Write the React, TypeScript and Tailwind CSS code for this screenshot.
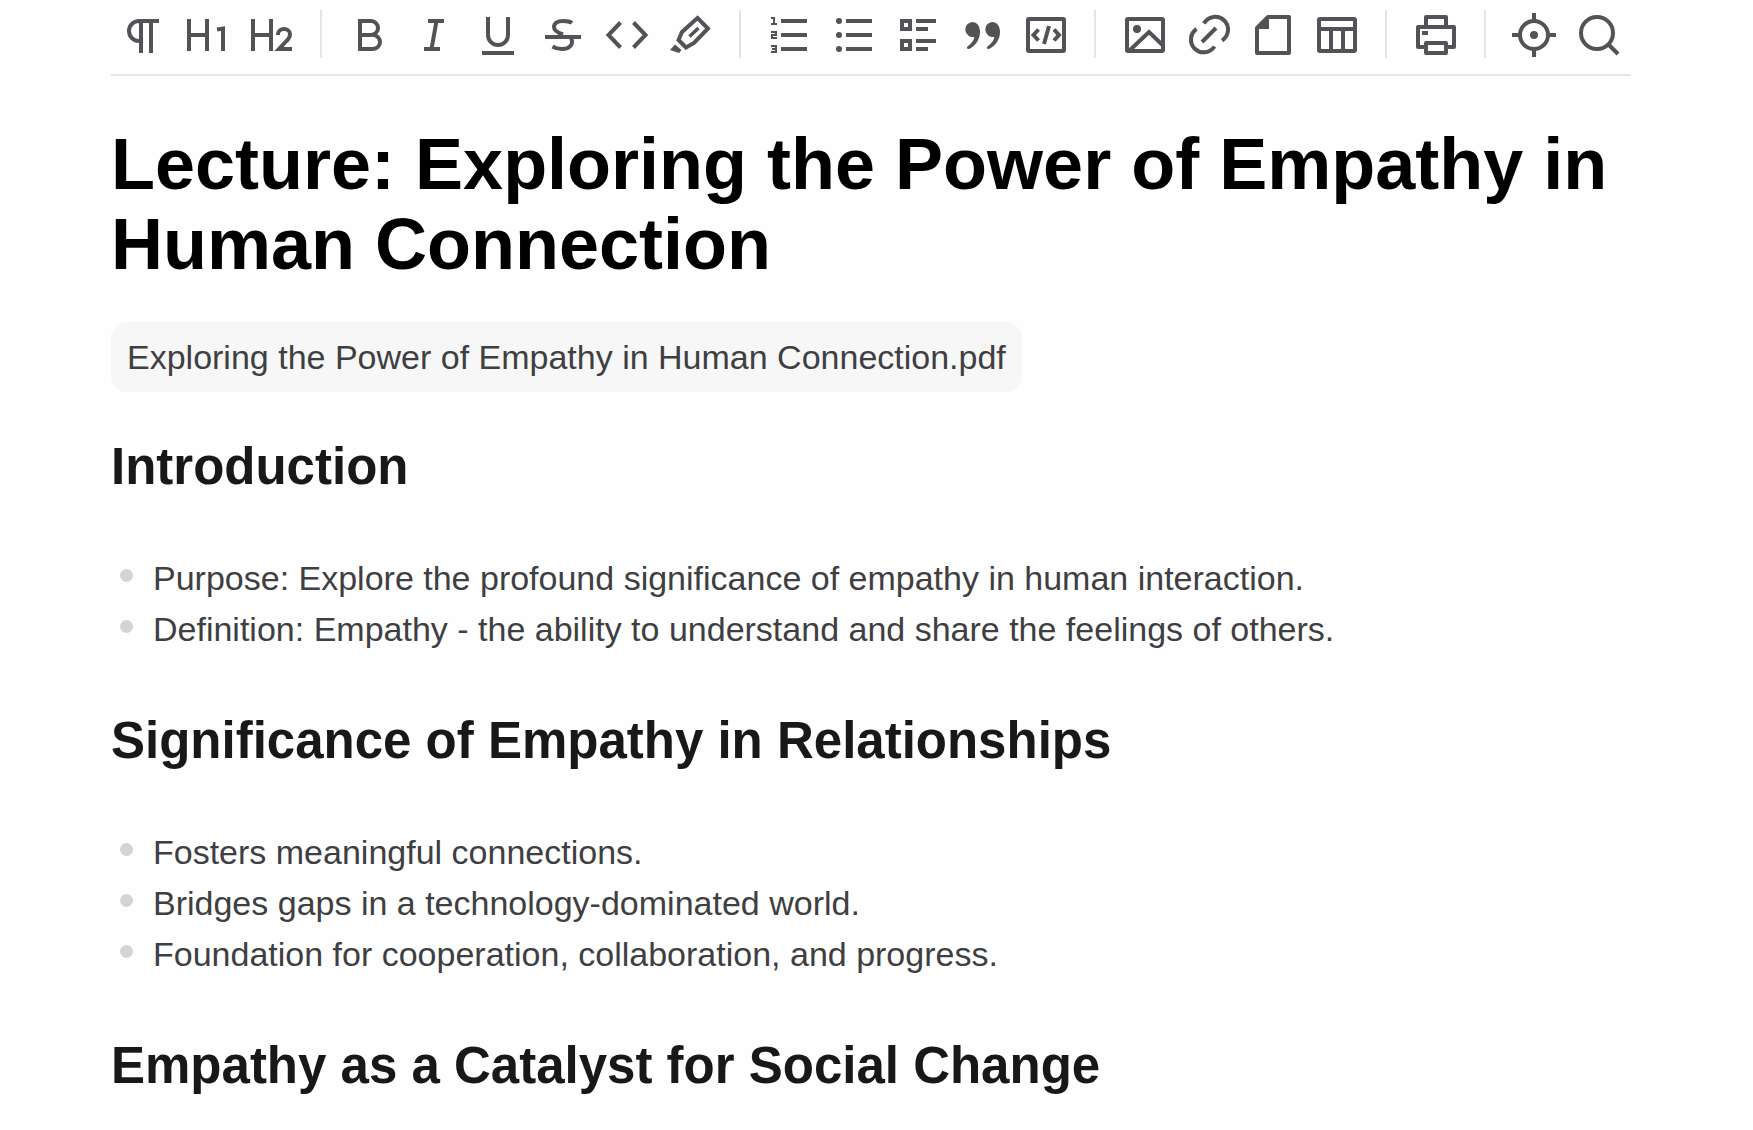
import type { ReactNode } from "react";

type Tool = { label: string; art: ReactNode };

const solid = { fill: "currentColor", stroke: "none" } as const;

const groups: Tool[][] = [
  [
    { label: "Paragraph", art: <path d="M40 10H20a10 10 0 0 0 0 20h2M22 10v32M32 10v32" /> },
    { label: "Heading 1", art: <path d="M6 8v32M24 8v32M6 24h18M34 18.500L40 17.500V40" /> },
    {
      label: "Heading 2",
      art: <path d="M6 8v32M24 8v32M6 24h18M31 24v-1a6 5 0 0 1 12 0c0 3-1.500 5-3 6.500L32 38H45" />,
    },
  ],
  [
    { label: "Bold", art: <path d="M14 24h11a7 7 0 0 0 0-14H14V38h13a7 7 0 0 0 0-14" /> },
    { label: "Italic", art: <path d="M18 10h16M14 38h16M26.500 10L21.500 38" /> },
    { label: "Underline", art: <path d="M14 6v18a10 10 0 0 0 20 0V6M8 42h32" /> },
    {
      label: "Strikethrough",
      art: <path d="M7 26h36M34 12c-2-1.500-5-2-9-2-5 0-9 2-9 6 0 3.500 3 5.500 9 7.500M33 27c3 6-1 11-9 11-4 0-7-1-9.500-2.500" />,
    },
    { label: "Inline code", art: <path d="M18.500 11.500L6.500 24l12 12.500M31.500 11.500L43.500 24l-12 12.500" /> },
    {
      label: "Highlight",
      art: (
        <>
          <path d="M31.500 7L42 17.500 28 32l-8 4.500L12.500 29l3.500-8z" />
          <path d="M23.500 25.500L32.500 17" strokeWidth={3.5} />
          <path d="M4 39l5-5.500 6.500 5.500-2.500 3z" {...solid} />
        </>
      ),
    },
  ],
  [
    {
      label: "Numbered list",
      art: (
        <>
          <path d="M16 10h26M16 24h26M16 38h26" />
          <path d="M6 7h4M9 6v7M6 13h6M6 21h5v3H7v3h5M6 35h5v6H6M7 38h4" strokeWidth={2} />
        </>
      ),
    },
    {
      label: "Bulleted list",
      art: (
        <>
          <path d="M17 10h26M17 24h26M17 38h26" />
          <circle cx="10" cy="10" r="3" {...solid} />
          <circle cx="10" cy="24" r="3" {...solid} />
          <circle cx="10" cy="38" r="3" {...solid} />
        </>
      ),
    },
    {
      label: "Checklist",
      art: <path d="M9 10h8v8H9zM9 30h8v8H9zM23 10h20M23 18h12M23 30h20M23 38h12" />,
    },
    {
      label: "Quote",
      art: (
        <path
          d="M15 11c5 0 8 4 8 10 0 8-5 14-11 17-1.500 .5-3-1-1.500-2.500 4-3 6.500-6 6.800-9.700A7.500 7.500 0 1 1 15 11zM35 11c5 0 8 4 8 10 0 8-5 14-11 17-1.500 .5-3-1-1.500-2.500 4-3 6.500-6 6.800-9.700A7.500 7.500 0 1 1 35 11z"
          {...solid}
        />
      ),
    },
    {
      label: "Code block",
      art: (
        <>
          <rect x="7" y="8" width="36" height="32" rx="1" />
          <path d="M17.500 18.500l-5 5.500 5 5.500M33 18.500l5 5.500-5 5.500M28 15l-5 18" />
        </>
      ),
    },
  ],
  [
    {
      label: "Image",
      art: (
        <>
          <rect x="7" y="8" width="36" height="32" rx="1" />
          <circle cx="17" cy="18" r="4" {...solid} />
          <path d="M9 40L29 21l14 13.500" />
        </>
      ),
    },
    {
      label: "Link",
      art: (
        <path d="M20 12.500A12.800 12.800 0 1 1 38 29.500M12.500 18A12.800 12.800 0 1 0 30.500 35.500M18 31L32 17" />
      ),
    },
    {
      label: "Note",
      art: (
        <>
          <path d="M20 6H41V42H9V17z" strokeLinejoin="round" />
          <path d="M21 5v13H8z" {...solid} />
        </>
      ),
    },
    {
      label: "Table",
      art: (
        <>
          <rect x="7" y="8" width="36" height="32" rx="1" />
          <path d="M7 18h36M19 18v22M31 18v22" />
        </>
      ),
    },
  ],
  [
    {
      label: "Print",
      art: (
        <>
          <path d="M15 16V6h20v10M15 36H7V16h36v20h-8M15 32h20v10H15z" strokeLinejoin="round" />
          <path d="M11 22h6" />
        </>
      ),
    },
  ],
  [
    {
      label: "Focus",
      art: (
        <>
          <circle cx="24" cy="24" r="14" />
          <path d="M24 2v8M24 38v8M2 24h8M38 24h8" />
          <circle cx="24" cy="24" r="4" {...solid} />
        </>
      ),
    },
    {
      label: "Search",
      art: (
        <>
          <circle cx="23" cy="22" r="16" />
          <path d="M34.500 33.500L44 43" />
        </>
      ),
    },
  ],
];

function ToolButton({ label, art }: Tool) {
  return (
    <button type="button" aria-label={label} className="flex w-16 shrink-0 justify-center text-[#525257]">
      <svg
        viewBox="0 -1 48 48"
        className="size-12 overflow-visible"
        fill="none"
        stroke="currentColor"
        strokeWidth={4}
        aria-hidden="true"
      >
        {art}
      </svg>
    </button>
  );
}

function Section({ title, items }: { title: string; items: string[] }) {
  return (
    <section>
      <h2 className="text-[51px] leading-[64px] font-bold text-[#18181b]">{title}</h2>
      {items.length > 0 && (
        <ul className="my-[54px]">
          {items.map((item) => (
            <li key={item} className="flex items-start pl-[9px] text-[34px] leading-[51px]">
              <span className="mt-4 mr-5 size-[13px] shrink-0 rounded-full bg-[#d4d4d6]" />
              {item}
            </li>
          ))}
        </ul>
      )}
    </section>
  );
}

export default function App() {
  return (
    <div className="min-h-screen bg-[#fefefe] pr-[122px] pl-[111px] font-['Liberation_Sans',Arial,sans-serif] text-[#3f3f43]">
      <header className="flex border-b-2 border-[#e4e4e4] pt-[10px] pb-4" role="toolbar" aria-label="Formatting">
        {groups.map((group, index) => (
          <div key={group[0].label} className="flex">
            {index > 0 && <div className="mr-4 ml-[17px] w-[2px] bg-[#e4e4e4]" />}
            {group.map((tool) => (
              <ToolButton key={tool.label} {...tool} />
            ))}
          </div>
        ))}
      </header>
      <main className="pt-12">
        <h1 className="text-[72px] leading-[80px] font-bold text-black">
          Lecture: Exploring the Power of Empathy in Human Connection
        </h1>
        <a
          href="#attachment"
          className="mt-[38px] mb-[43px] flex h-[70px] w-fit items-center rounded-2xl bg-[#f7f7f7] px-4 text-[34px] leading-[51px]"
        >
          Exploring the Power of Empathy in Human Connection.pdf
        </a>
        <Section
          title="Introduction"
          items={[
            "Purpose: Explore the profound significance of empathy in human interaction.",
            "Definition: Empathy - the ability to understand and share the feelings of others.",
          ]}
        />
        <Section
          title="Significance of Empathy in Relationships"
          items={[
            "Fosters meaningful connections.",
            "Bridges gaps in a technology-dominated world.",
            "Foundation for cooperation, collaboration, and progress.",
          ]}
        />
        <Section title="Empathy as a Catalyst for Social Change" items={[]} />
      </main>
    </div>
  );
}
